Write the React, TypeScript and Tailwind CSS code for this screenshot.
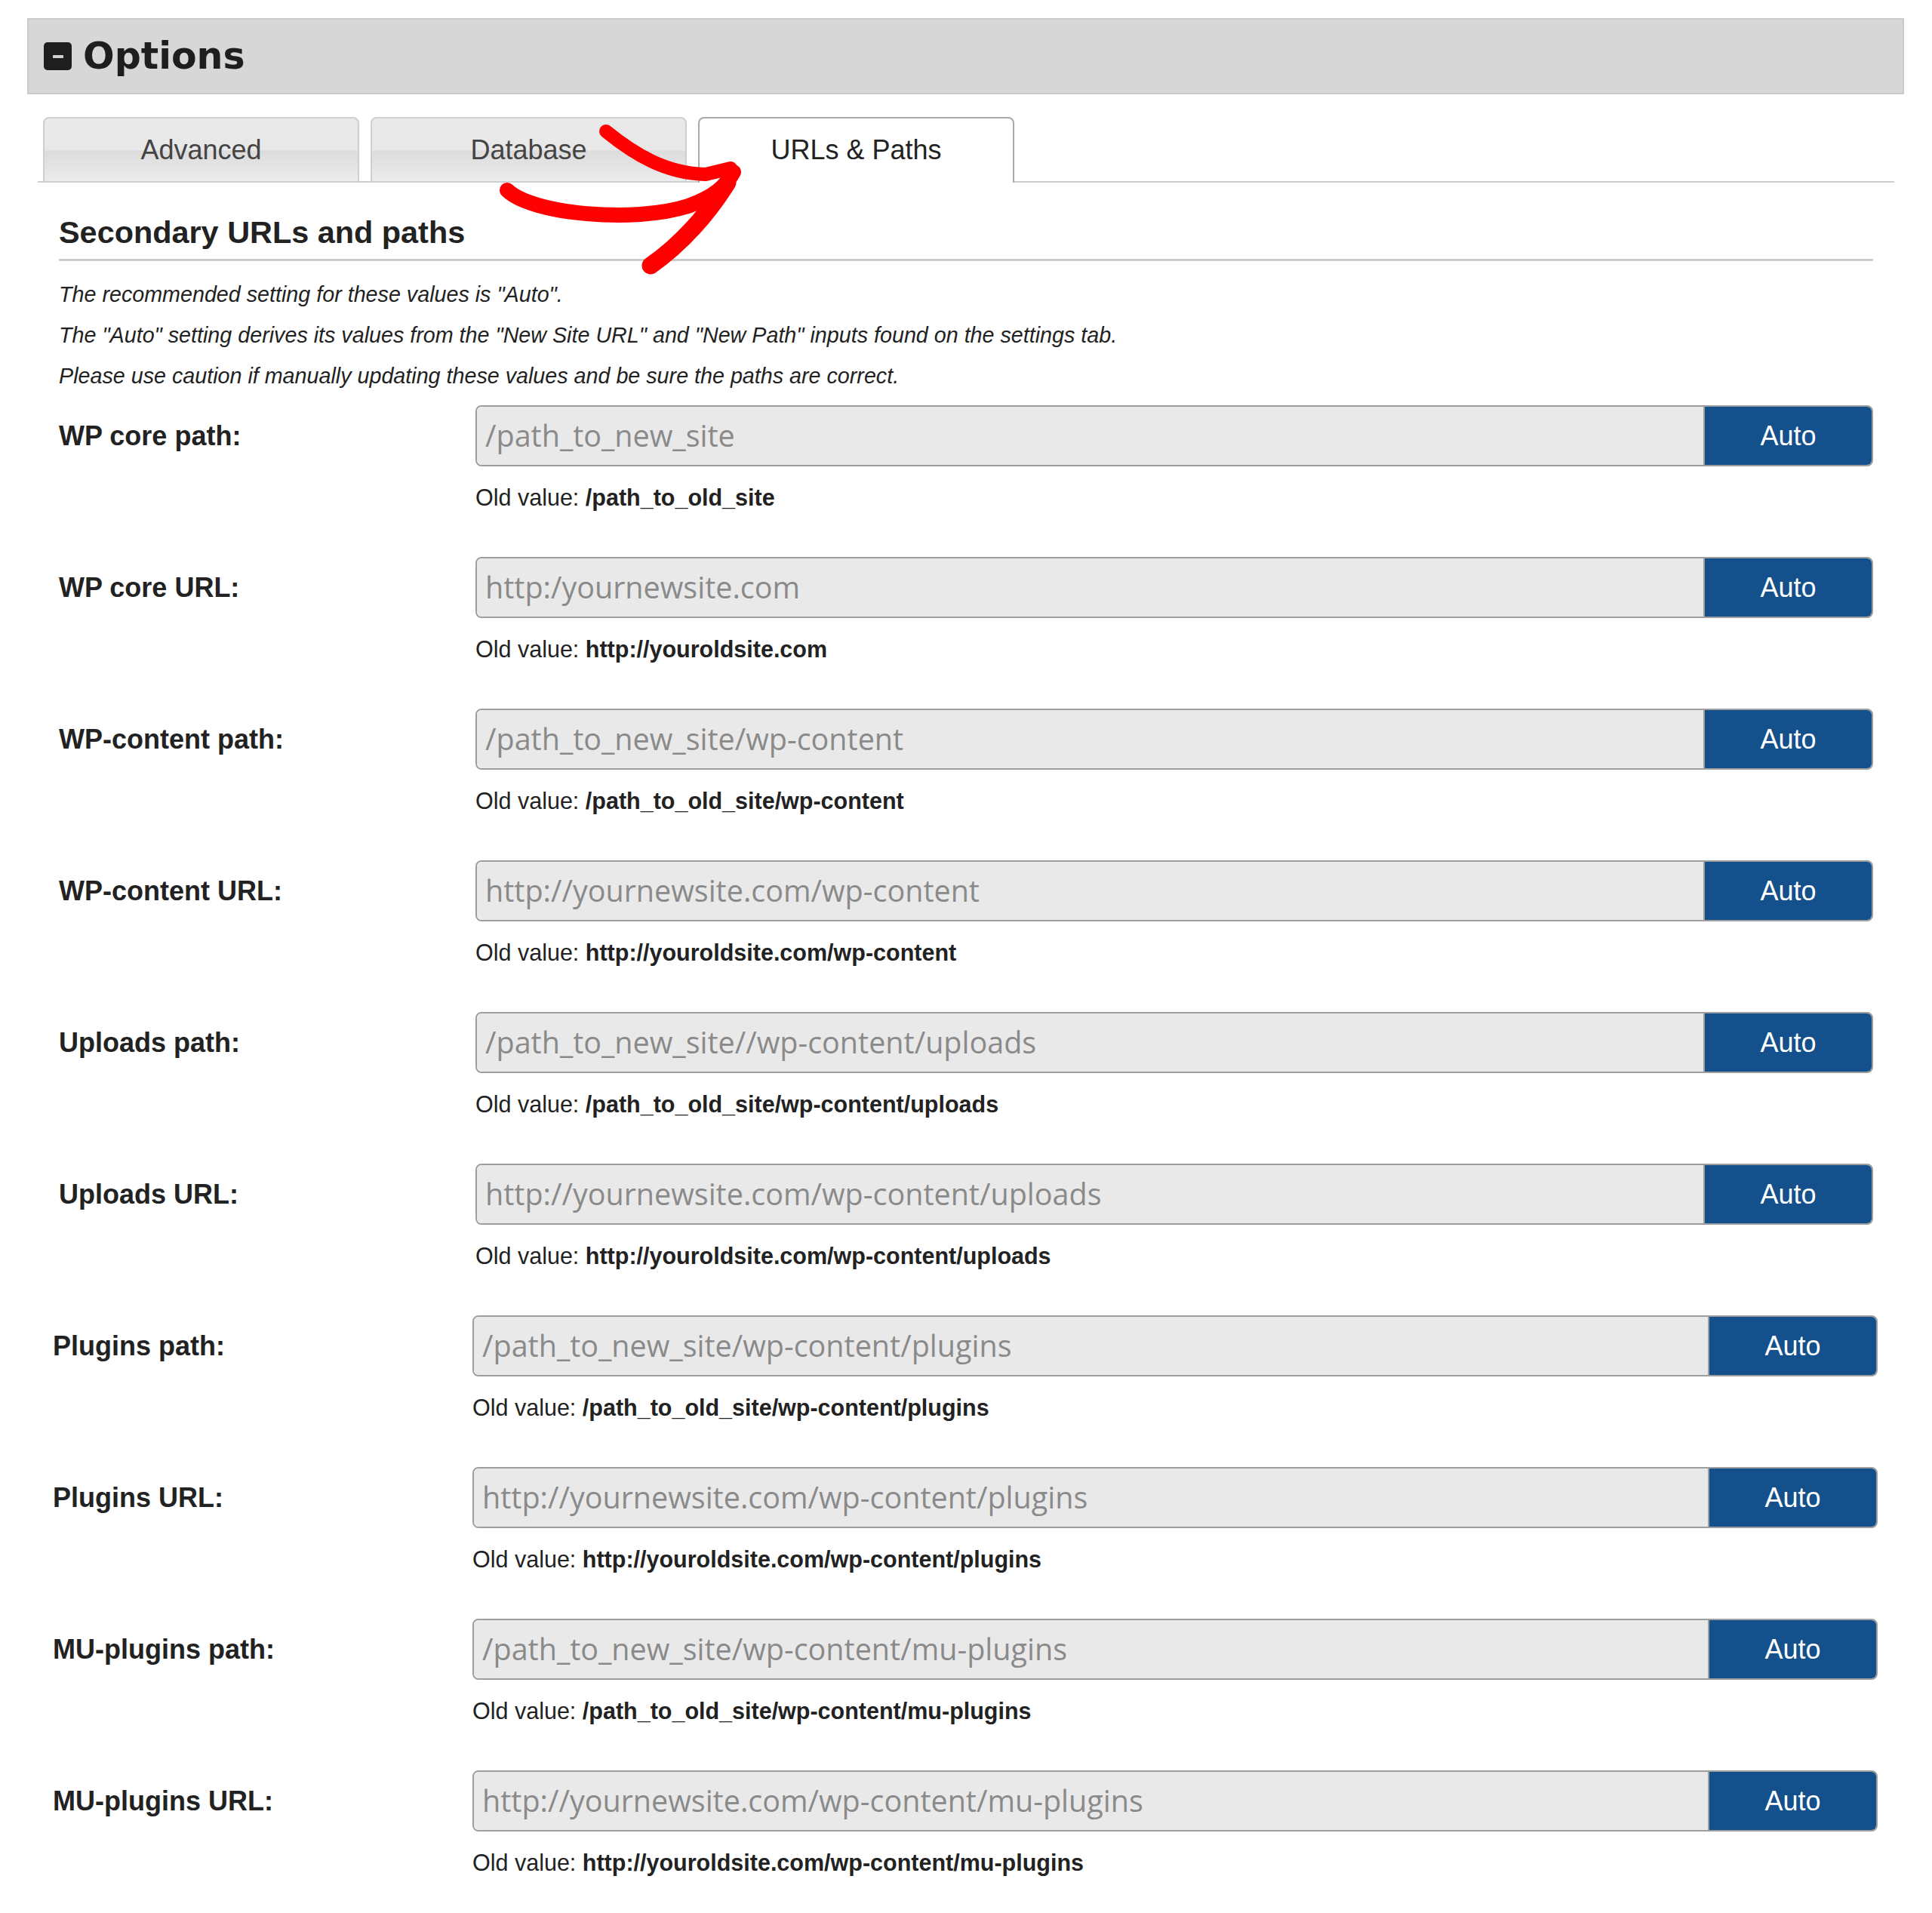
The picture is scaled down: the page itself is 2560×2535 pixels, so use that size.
import React from "react";

type Row = { label: string; ph: string; old: string };

const rowsTop: Row[] = [
  { label: "WP core path:", ph: "/path_to_new_site", old: "/path_to_old_site" },
  { label: "WP core URL:", ph: "http:/yournewsite.com", old: "http://youroldsite.com" },
  { label: "WP-content path:", ph: "/path_to_new_site/wp-content", old: "/path_to_old_site/wp-content" },
  { label: "WP-content URL:", ph: "http://yournewsite.com/wp-content", old: "http://youroldsite.com/wp-content" },
  { label: "Uploads path:", ph: "/path_to_new_site//wp-content/uploads", old: "/path_to_old_site/wp-content/uploads" },
  { label: "Uploads URL:", ph: "http://yournewsite.com/wp-content/uploads", old: "http://youroldsite.com/wp-content/uploads" },
];

const rowsBottom: Row[] = [
  { label: "Plugins path:", ph: "/path_to_new_site/wp-content/plugins", old: "/path_to_old_site/wp-content/plugins" },
  { label: "Plugins URL:", ph: "http://yournewsite.com/wp-content/plugins", old: "http://youroldsite.com/wp-content/plugins" },
  { label: "MU-plugins path:", ph: "/path_to_new_site/wp-content/mu-plugins", old: "/path_to_old_site/wp-content/mu-plugins" },
  { label: "MU-plugins URL:", ph: "http://yournewsite.com/wp-content/mu-plugins", old: "http://youroldsite.com/wp-content/mu-plugins" },
];

function FieldRow({ row, wide }: { row: Row; wide?: boolean }) {
  return (
    <div className="mb-[59px] flex">
      <div
        className={
          (wide ? "w-[556px] " : "w-[552px] ") +
          "flex h-[81px] shrink-0 items-center text-[36px] font-bold leading-none text-[#222222]"
        }
      >
        {row.label}
      </div>
      <div className="flex flex-1 flex-col">
        <div className="flex h-[81px] overflow-hidden rounded-[8px] border-2 border-[#9e9e9e]">
          <input
            readOnly
            placeholder={row.ph}
            className="min-w-0 flex-1 bg-[#e9e9e9] pl-[11px] font-['Open_Sans',sans-serif] text-[39.5px] text-[#333] outline-none placeholder:text-[#8a8a8a]"
          />
          <button className="w-[223px] shrink-0 border-l-2 border-[#9e9e9e] bg-[#14508b] text-[36px] leading-none text-white">
            Auto
          </button>
        </div>
        <div className="mt-[21px] text-[30.5px] leading-[40px] text-[#222222]">
          Old value: <span className="font-bold">{row.old}</span>
        </div>
      </div>
    </div>
  );
}

export default function App() {
  return (
    <div className="relative min-h-[2535px] w-[2560px] bg-white pl-[36px] pr-[37px] pt-[24px] font-['Liberation_Sans',Arial,sans-serif]">
      {/* Header */}
      <div className="flex h-[101px] items-center border-2 border-[#cacaca] bg-[#d7d7d7] pl-[20px]">
        <div className="flex h-[37px] w-[37px] items-center justify-center rounded-[5px] bg-[#1e1e1e]">
          <div className="h-[4px] w-[14px] rounded-[1px] bg-[#d0d0d0]" />
        </div>
        <span className="ml-[15px] font-['DejaVu_Sans',sans-serif] text-[49px] font-bold leading-none text-[#1e1e1e]">
          Options
        </span>
      </div>

      {/* Tabs */}
      <div className="ml-[14px] mr-[13px] mt-[30px] flex gap-[15px] border-b-2 border-[#cccccc] pl-[7px]">
        <div className="-mb-[2px] flex h-[87px] w-[419px] items-center justify-center rounded-t-[8px] border-2 border-[#cfcfcf] bg-[linear-gradient(180deg,#e9e9e9_0%,#e8e8e8_50%,#dcdcdc_52%,#ececec_100%)] text-[36px] text-[#444444]">
          Advanced
        </div>
        <div className="-mb-[2px] flex h-[87px] w-[419px] items-center justify-center rounded-t-[8px] border-2 border-[#cfcfcf] bg-[linear-gradient(180deg,#e9e9e9_0%,#e8e8e8_50%,#dcdcdc_52%,#ececec_100%)] text-[36px] text-[#444444]">
          Database
        </div>
        <div className="-mb-[2px] flex h-[87px] w-[419px] items-center justify-center rounded-t-[8px] border-2 border-b-0 border-[#aaaaaa] bg-white pb-[2px] text-[36px] text-[#222222]">
          URLs &amp; Paths
        </div>
      </div>

      {/* Content */}
      <div className="ml-[42px] mr-[41px]">
        <h2 className="mt-[42px] border-b-[3px] border-[#cccccc] pb-[11px] text-[41.4px] font-bold leading-[48px] text-[#222222]">
          Secondary URLs and paths
        </h2>
        <div className="mt-[17px] text-[28.7px] italic leading-[54px] text-[#222222]">
          <p>The recommended setting for these values is "Auto".</p>
          <p>The "Auto" setting derives its values from the "New Site URL" and "New Path" inputs found on the settings tab.</p>
          <p>Please use caution if manually updating these values and be sure the paths are correct.</p>
        </div>

        <div className="mt-[12px]">
          {rowsTop.map((r) => (
            <FieldRow key={r.label} row={r} />
          ))}
        </div>
        <div className="-ml-[8px] -mr-[6px]">
          {rowsBottom.map((r) => (
            <FieldRow key={r.label} row={r} wide />
          ))}
        </div>
      </div>

      {/* Red annotation arrow */}
      <svg
        className="pointer-events-none absolute left-[650px] top-[160px]"
        width="360"
        height="210"
        viewBox="0 0 360 210"
        fill="none"
      >
        <path
          d="M22 92 C55 124 190 136 262 113 C296 101 312 86 322 68"
          stroke="#ff0000"
          strokeWidth="20"
          strokeLinecap="round"
          strokeLinejoin="round"
        />
        <path
          d="M153 14 C190 44 232 70 285 71 L318 63"
          stroke="#ff0000"
          strokeWidth="18"
          strokeLinecap="round"
          strokeLinejoin="round"
        />
        <path
          d="M314 82 C288 124 252 164 212 192"
          stroke="#ff0000"
          strokeWidth="23"
          strokeLinecap="round"
          strokeLinejoin="round"
        />
      </svg>
    </div>
  );
}
